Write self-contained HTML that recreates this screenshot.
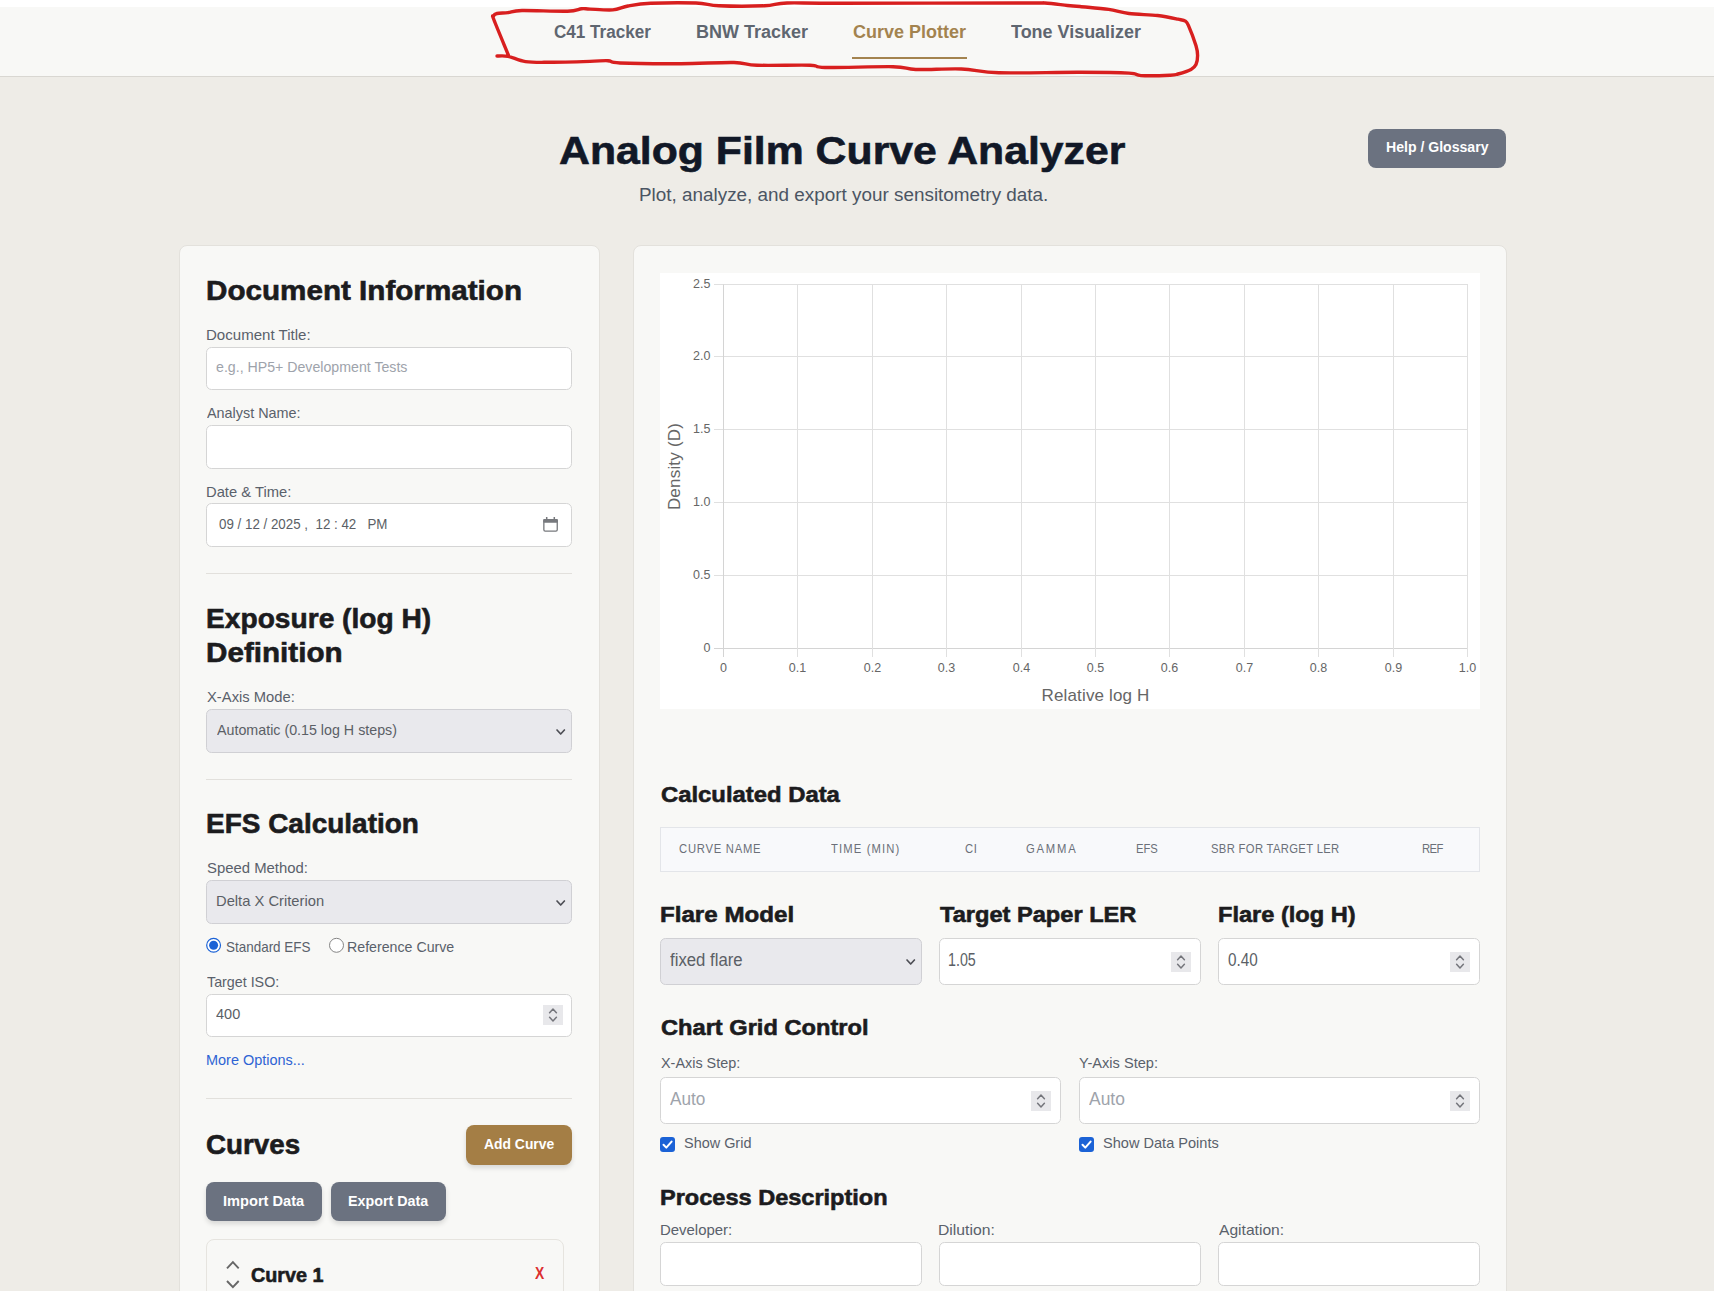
<!DOCTYPE html>
<html><head><meta charset="utf-8">
<style>
html,body{margin:0;padding:0}
body{width:1714px;height:1291px;overflow:hidden;background:#eeece7;position:relative;font-family:"Liberation Sans",sans-serif}
.a{position:absolute;box-sizing:border-box}
.t{position:absolute;white-space:pre;line-height:1;transform-origin:0 0;font-family:"Liberation Sans",sans-serif}
.nav{background:#f8f8f6;border-bottom:1px solid #d9d7d2}
.panel{background:#f8f8f6;border:1px solid #e3e1dc;border-radius:8px}
.inp{background:#ffffff;border:1px solid #d5d5d5;border-radius:5.5px}
.sel{background:#e9e9ed;border:1px solid #d0d0d4;border-radius:5.5px}
.hr{background:#e2e0dc}
.btn{border-radius:8px}
.card{background:#f8f8f6;border:1px solid #e6e4df;border-radius:8px}
</style></head><body>
<div class="a top" style="left:0px;top:0px;width:1714px;height:7px;background:#ffffff"></div>
<div class="a nav" style="left:0px;top:7px;width:1714px;height:70px;"></div>
<div class="a " style="left:852px;top:57px;width:115px;height:2px;background:#a3834f"></div>
<div class="a btn" style="left:1368px;top:129px;width:138px;height:39px;background:#6b7280"></div>
<div class="a panel" style="left:179px;top:245px;width:421px;height:1120px;"></div>
<div class="a panel" style="left:633px;top:245px;width:874px;height:1120px;"></div>
<div class="a inp" style="left:206px;top:347px;width:366px;height:43px;"></div>
<div class="a inp" style="left:206px;top:425px;width:366px;height:44px;"></div>
<div class="a inp" style="left:206px;top:503px;width:366px;height:44px;"></div>
<svg class="a" style="left:541px;top:515px" width="20" height="20"><rect x="2.85" y="4.75" width="13.4" height="11.4" rx="1.3" fill="none" stroke="#77797d" stroke-width="1.3"/><rect x="2.2" y="4.1" width="14.7" height="3.7" rx="1" fill="#77797d"/><path d="M5.7,1.9 V4.5 M13.3,1.9 V4.5" stroke="#77797d" stroke-width="1.5"/></svg>
<div class="a hr" style="left:206px;top:573px;width:366px;height:1px;"></div>
<div class="a sel" style="left:206px;top:709px;width:366px;height:44px;"></div>
<svg class="a" style="left:555.3px;top:727.5px" width="11.4" height="8"><path d="M2,2 L5.7,6 L9.4,2" fill="none" stroke="#4e4f56" stroke-width="1.7" stroke-linecap="round" stroke-linejoin="round"/></svg>
<div class="a hr" style="left:206px;top:779px;width:366px;height:1px;"></div>
<div class="a sel" style="left:206px;top:880px;width:366px;height:44px;"></div>
<svg class="a" style="left:555.3px;top:898.5px" width="11.4" height="8"><path d="M2,2 L5.7,6 L9.4,2" fill="none" stroke="#4e4f56" stroke-width="1.7" stroke-linecap="round" stroke-linejoin="round"/></svg>
<svg class="a" style="left:204px;top:936px" width="20" height="20"><circle cx="9.6" cy="9.3" r="6.9" fill="#fff" stroke="#1b62d6" stroke-width="1.2"/><circle cx="9.6" cy="9.3" r="4.5" fill="#1b62d6"/></svg>
<svg class="a" style="left:326px;top:936px" width="20" height="20"><circle cx="10.5" cy="9.3" r="7" fill="#fff" stroke="#858585" stroke-width="1"/></svg>
<div class="a inp" style="left:206px;top:994px;width:366px;height:43px;"></div>
<div class="a" style="left:543px;top:1005px;width:20px;height:20px;background:#e8e8eb"></div><svg class="a" style="left:543px;top:1005px" width="20" height="20"><path d="M6.6,7.7 L10.0,4.1 L13.4,7.7 M6.6,12.3 L10.0,15.9 L13.4,12.3" fill="none" stroke="#74757b" stroke-width="1.5" stroke-linecap="round" stroke-linejoin="round"/></svg>
<div class="a hr" style="left:206px;top:1098px;width:366px;height:1px;"></div>
<div class="a btn" style="left:466px;top:1125px;width:106px;height:40px;background:#a47e45;box-shadow:0 3px 5px rgba(0,0,0,0.13)"></div>
<div class="a btn" style="left:206px;top:1182px;width:116px;height:39px;background:#6b7280;box-shadow:0 3px 5px rgba(0,0,0,0.13)"></div>
<div class="a btn" style="left:331px;top:1182px;width:115px;height:39px;background:#6b7280;box-shadow:0 3px 5px rgba(0,0,0,0.13)"></div>
<div class="a card" style="left:206px;top:1239px;width:358px;height:120px;"></div>
<svg class="a" style="left:220px;top:1255px" width="26" height="36"><path d="M7,13.3 L12.9,7.2 L18.7,13.3 M7,26 L12.9,32.2 L18.7,26" fill="none" stroke="#676767" stroke-width="1.9" stroke-linecap="butt" stroke-linejoin="miter"/></svg>
<div class="a " style="left:660px;top:273px;width:820px;height:436px;background:#ffffff"></div>
<svg class="a" style="left:660px;top:273px;font-family:'Liberation Sans',sans-serif" width="820" height="436"><path d="M54,11.5 H808.0" stroke="#e0e0e0" stroke-width="1"/><path d="M54,83.5 H808.0" stroke="#e0e0e0" stroke-width="1"/><path d="M54,156.5 H808.0" stroke="#e0e0e0" stroke-width="1"/><path d="M54,229.5 H808.0" stroke="#e0e0e0" stroke-width="1"/><path d="M54,302.5 H808.0" stroke="#e0e0e0" stroke-width="1"/><path d="M54,375.5 H808.0" stroke="#d4d4d4" stroke-width="1"/><path d="M63.5,11.5 V384" stroke="#d4d4d4" stroke-width="1"/><path d="M137.5,11.5 V384" stroke="#e0e0e0" stroke-width="1"/><path d="M212.5,11.5 V384" stroke="#e0e0e0" stroke-width="1"/><path d="M286.5,11.5 V384" stroke="#e0e0e0" stroke-width="1"/><path d="M361.5,11.5 V384" stroke="#e0e0e0" stroke-width="1"/><path d="M435.5,11.5 V384" stroke="#e0e0e0" stroke-width="1"/><path d="M509.5,11.5 V384" stroke="#e0e0e0" stroke-width="1"/><path d="M584.5,11.5 V384" stroke="#e0e0e0" stroke-width="1"/><path d="M658.5,11.5 V384" stroke="#e0e0e0" stroke-width="1"/><path d="M733.5,11.5 V384" stroke="#e0e0e0" stroke-width="1"/><path d="M807.5,11.5 V384" stroke="#e0e0e0" stroke-width="1"/><text x="50.5" y="15.2" text-anchor="end" font-size="12.5" fill="#666">2.5</text><text x="50.5" y="87.2" text-anchor="end" font-size="12.5" fill="#666">2.0</text><text x="50.5" y="160.2" text-anchor="end" font-size="12.5" fill="#666">1.5</text><text x="50.5" y="233.2" text-anchor="end" font-size="12.5" fill="#666">1.0</text><text x="50.5" y="306.2" text-anchor="end" font-size="12.5" fill="#666">0.5</text><text x="50.5" y="379.2" text-anchor="end" font-size="12.5" fill="#666">0</text><text x="63.5" y="399" text-anchor="middle" font-size="12.5" fill="#666">0</text><text x="137.5" y="399" text-anchor="middle" font-size="12.5" fill="#666">0.1</text><text x="212.5" y="399" text-anchor="middle" font-size="12.5" fill="#666">0.2</text><text x="286.5" y="399" text-anchor="middle" font-size="12.5" fill="#666">0.3</text><text x="361.5" y="399" text-anchor="middle" font-size="12.5" fill="#666">0.4</text><text x="435.5" y="399" text-anchor="middle" font-size="12.5" fill="#666">0.5</text><text x="509.5" y="399" text-anchor="middle" font-size="12.5" fill="#666">0.6</text><text x="584.5" y="399" text-anchor="middle" font-size="12.5" fill="#666">0.7</text><text x="658.5" y="399" text-anchor="middle" font-size="12.5" fill="#666">0.8</text><text x="733.5" y="399" text-anchor="middle" font-size="12.5" fill="#666">0.9</text><text x="807.5" y="399" text-anchor="middle" font-size="12.5" fill="#666">1.0</text><text x="435.5" y="428" text-anchor="middle" font-size="17" letter-spacing="0.15" fill="#666">Relative log H</text><text transform="translate(20,193.5) rotate(-90)" text-anchor="middle" font-size="17" letter-spacing="0.2" fill="#666">Density (D)</text></svg>
<div class="a " style="left:660px;top:827px;width:820px;height:45px;background:#f8f9fb;border:1px solid #e3e5e9"></div>
<div class="a sel" style="left:660px;top:938px;width:262px;height:47px;"></div>
<svg class="a" style="left:904.9px;top:958.3px" width="11.4" height="8"><path d="M2,2 L5.7,6 L9.4,2" fill="none" stroke="#4e4f56" stroke-width="1.7" stroke-linecap="round" stroke-linejoin="round"/></svg>
<div class="a inp" style="left:939px;top:938px;width:262px;height:47px;"></div>
<div class="a" style="left:1171px;top:952px;width:20px;height:20px;background:#e8e8eb"></div><svg class="a" style="left:1171px;top:952px" width="20" height="20"><path d="M6.6,7.7 L10.0,4.1 L13.4,7.7 M6.6,12.3 L10.0,15.9 L13.4,12.3" fill="none" stroke="#74757b" stroke-width="1.5" stroke-linecap="round" stroke-linejoin="round"/></svg>
<div class="a inp" style="left:1218px;top:938px;width:262px;height:47px;"></div>
<div class="a" style="left:1450px;top:952px;width:20px;height:20px;background:#e8e8eb"></div><svg class="a" style="left:1450px;top:952px" width="20" height="20"><path d="M6.6,7.7 L10.0,4.1 L13.4,7.7 M6.6,12.3 L10.0,15.9 L13.4,12.3" fill="none" stroke="#74757b" stroke-width="1.5" stroke-linecap="round" stroke-linejoin="round"/></svg>
<div class="a inp" style="left:660px;top:1077px;width:401px;height:47px;"></div>
<div class="a" style="left:1031px;top:1091px;width:20px;height:20px;background:#e8e8eb"></div><svg class="a" style="left:1031px;top:1091px" width="20" height="20"><path d="M6.6,7.7 L10.0,4.1 L13.4,7.7 M6.6,12.3 L10.0,15.9 L13.4,12.3" fill="none" stroke="#74757b" stroke-width="1.5" stroke-linecap="round" stroke-linejoin="round"/></svg>
<div class="a inp" style="left:1079px;top:1077px;width:401px;height:47px;"></div>
<div class="a" style="left:1450px;top:1091px;width:20px;height:20px;background:#e8e8eb"></div><svg class="a" style="left:1450px;top:1091px" width="20" height="20"><path d="M6.6,7.7 L10.0,4.1 L13.4,7.7 M6.6,12.3 L10.0,15.9 L13.4,12.3" fill="none" stroke="#74757b" stroke-width="1.5" stroke-linecap="round" stroke-linejoin="round"/></svg>
<div class="a" style="left:660px;top:1136.5px;width:15px;height:15px;background:#1b62d6;border-radius:3px"></div><svg class="a" style="left:660px;top:1136.5px" width="15" height="15"><path d="M3.5,7.8 L6.3,10.6 L11.6,4.6" fill="none" stroke="#fff" stroke-width="2" stroke-linecap="round" stroke-linejoin="round"/></svg>
<div class="a" style="left:1079px;top:1136.5px;width:15px;height:15px;background:#1b62d6;border-radius:3px"></div><svg class="a" style="left:1079px;top:1136.5px" width="15" height="15"><path d="M3.5,7.8 L6.3,10.6 L11.6,4.6" fill="none" stroke="#fff" stroke-width="2" stroke-linecap="round" stroke-linejoin="round"/></svg>
<div class="a inp" style="left:660px;top:1242px;width:262px;height:44px;"></div>
<div class="a inp" style="left:939px;top:1242px;width:262px;height:44px;"></div>
<div class="a inp" style="left:1218px;top:1242px;width:262px;height:44px;"></div>
<div class="t" style="left:554.00px;top:22.80px;font-size:18.75px;font-weight:700;color:#5f6670;letter-spacing:0.000px;transform:scaleX(0.9119)">C41 Tracker</div>
<div class="t" style="left:695.64px;top:22.80px;font-size:18.75px;font-weight:700;color:#5f6670;letter-spacing:0.000px;transform:scaleX(0.9595)">BNW Tracker</div>
<div class="t" style="left:852.80px;top:22.80px;font-size:18.75px;font-weight:700;color:#a3834f;letter-spacing:0.000px;transform:scaleX(0.9600)">Curve Plotter</div>
<div class="t" style="left:1011.10px;top:22.80px;font-size:18.75px;font-weight:700;color:#5f6670;letter-spacing:0.000px;transform:scaleX(0.9574)">Tone Visualizer</div>
<div class="t" style="left:558.60px;top:130.80px;font-size:39.24px;font-weight:700;color:#111827;letter-spacing:0.000px;transform:scaleX(1.0901);-webkit-text-stroke:0.6px #111827">Analog Film Curve Analyzer</div>
<div class="t" style="left:638.99px;top:185.50px;font-size:18.75px;font-weight:400;color:#4b5563;letter-spacing:0.000px;transform:scaleX(1.0070)">Plot, analyze, and export your sensitometry data.</div>
<div class="t" style="left:1385.67px;top:138.70px;font-size:15.12px;font-weight:700;color:#ffffff;letter-spacing:0.000px;transform:scaleX(0.9315)">Help / Glossary</div>
<div class="t" style="left:205.93px;top:276.70px;font-size:27.62px;font-weight:700;color:#1c1c1e;letter-spacing:0.000px;transform:scaleX(1.0730);-webkit-text-stroke:0.6px #1c1c1e">Document Information</div>
<div class="t" style="left:205.69px;top:327.90px;font-size:14.97px;font-weight:400;color:#5a616b;letter-spacing:0.000px;transform:scaleX(1.0058)">Document Title:</div>
<div class="t" style="left:216.40px;top:360.00px;font-size:14.24px;font-weight:400;color:#9ea3ab;letter-spacing:0.000px;transform:scaleX(0.9951)">e.g., HP5+ Development Tests</div>
<div class="t" style="left:207.00px;top:405.60px;font-size:14.97px;font-weight:400;color:#5a616b;letter-spacing:0.000px;transform:scaleX(0.9618)">Analyst Name:</div>
<div class="t" style="left:205.61px;top:485.00px;font-size:14.97px;font-weight:400;color:#5a616b;letter-spacing:0.000px;transform:scaleX(0.9855)">Date &amp; Time:</div>
<div class="t" style="left:219.30px;top:516.20px;font-size:15.55px;font-weight:400;color:#5b5f66;letter-spacing:0.000px;transform:scaleX(0.8584)">09 / 12 / 2025 ,  12 : 42   PM</div>
<div class="t" style="left:205.98px;top:604.70px;font-size:27.62px;font-weight:700;color:#1c1c1e;letter-spacing:0.000px;transform:scaleX(1.0197);-webkit-text-stroke:0.6px #1c1c1e">Exposure (log H)</div>
<div class="t" style="left:205.93px;top:639.20px;font-size:27.62px;font-weight:700;color:#1c1c1e;letter-spacing:0.000px;transform:scaleX(1.0732);-webkit-text-stroke:0.6px #1c1c1e">Definition</div>
<div class="t" style="left:206.60px;top:690.00px;font-size:14.97px;font-weight:400;color:#5a616b;letter-spacing:0.000px;transform:scaleX(0.9869)">X-Axis Mode:</div>
<div class="t" style="left:216.60px;top:722.80px;font-size:14.97px;font-weight:400;color:#5b5f66;letter-spacing:0.000px;transform:scaleX(0.9530)">Automatic (0.15 log H steps)</div>
<div class="t" style="left:205.99px;top:810.00px;font-size:27.62px;font-weight:700;color:#1c1c1e;letter-spacing:0.000px;transform:scaleX(1.0129);-webkit-text-stroke:0.6px #1c1c1e">EFS Calculation</div>
<div class="t" style="left:206.60px;top:860.80px;font-size:14.97px;font-weight:400;color:#5a616b;letter-spacing:0.000px;transform:scaleX(0.9943)">Speed Method:</div>
<div class="t" style="left:215.62px;top:894.00px;font-size:14.97px;font-weight:400;color:#5b5f66;letter-spacing:0.000px;transform:scaleX(0.9845)">Delta X Criterion</div>
<div class="t" style="left:225.50px;top:940.20px;font-size:14.97px;font-weight:400;color:#5a616b;letter-spacing:0.000px;transform:scaleX(0.8986)">Standard EFS</div>
<div class="t" style="left:347.05px;top:940.20px;font-size:14.97px;font-weight:400;color:#5a616b;letter-spacing:0.000px;transform:scaleX(0.9479)">Reference Curve</div>
<div class="t" style="left:206.60px;top:975.30px;font-size:14.97px;font-weight:400;color:#5a616b;letter-spacing:0.000px;transform:scaleX(0.9538)">Target ISO:</div>
<div class="t" style="left:216.30px;top:1007.20px;font-size:14.97px;font-weight:400;color:#5b5f66;letter-spacing:0.000px;transform:scaleX(0.9696)">400</div>
<div class="t" style="left:205.63px;top:1053.00px;font-size:14.97px;font-weight:400;color:#2f64d4;letter-spacing:0.000px;transform:scaleX(0.9664)">More Options...</div>
<div class="t" style="left:205.97px;top:1132.30px;font-size:27.03px;font-weight:700;color:#1c1c1e;letter-spacing:0.000px;transform:scaleX(1.0271);-webkit-text-stroke:0.6px #1c1c1e">Curves</div>
<div class="t" style="left:484.00px;top:1135.80px;font-size:15.41px;font-weight:700;color:#ffffff;letter-spacing:0.000px;transform:scaleX(0.9013)">Add Curve</div>
<div class="t" style="left:222.75px;top:1193.00px;font-size:15.41px;font-weight:700;color:#ffffff;letter-spacing:0.000px;transform:scaleX(0.9479)">Import Data</div>
<div class="t" style="left:347.57px;top:1193.00px;font-size:15.41px;font-weight:700;color:#ffffff;letter-spacing:0.000px;transform:scaleX(0.9279)">Export Data</div>
<div class="t" style="left:251.00px;top:1264.90px;font-size:20.06px;font-weight:700;color:#1c1c1e;letter-spacing:0.000px;transform:scaleX(0.9865);-webkit-text-stroke:0.6px #1c1c1e">Curve 1</div>
<div class="t" style="left:534.70px;top:1265.00px;font-size:17.3px;font-weight:700;color:#dc2f2f;letter-spacing:0.000px;transform:scaleX(0.8000)">X</div>
<div class="t" style="left:660.70px;top:783.40px;font-size:22.67px;font-weight:700;color:#1c1c1e;letter-spacing:0.000px;transform:scaleX(1.0524);-webkit-text-stroke:0.6px #1c1c1e">Calculated Data</div>
<div class="t" style="left:678.90px;top:843.10px;font-size:12.94px;font-weight:400;color:#6b7079;letter-spacing:0.860px;transform:scaleX(0.8700)">CURVE NAME</div>
<div class="t" style="left:831.00px;top:843.10px;font-size:12.94px;font-weight:400;color:#6b7079;letter-spacing:1.293px;transform:scaleX(0.8700)">TIME (MIN)</div>
<div class="t" style="left:964.70px;top:843.10px;font-size:12.94px;font-weight:400;color:#6b7079;letter-spacing:0.645px;transform:scaleX(0.8700)">CI</div>
<div class="t" style="left:1026.00px;top:843.10px;font-size:12.94px;font-weight:400;color:#6b7079;letter-spacing:2.056px;transform:scaleX(0.8700)">GAMMA</div>
<div class="t" style="left:1136.13px;top:843.10px;font-size:12.94px;font-weight:400;color:#6b7079;letter-spacing:-0.025px;transform:scaleX(0.8700)">EFS</div>
<div class="t" style="left:1211.00px;top:843.10px;font-size:12.94px;font-weight:400;color:#6b7079;letter-spacing:0.379px;transform:scaleX(0.8700)">SBR FOR TARGET LER</div>
<div class="t" style="left:1422.43px;top:843.10px;font-size:12.94px;font-weight:400;color:#6b7079;letter-spacing:-0.590px;transform:scaleX(0.8700)">REF</div>
<div class="t" style="left:659.62px;top:904.20px;font-size:22.38px;font-weight:700;color:#1c1c1e;letter-spacing:0.000px;transform:scaleX(1.0785);-webkit-text-stroke:0.6px #1c1c1e">Flare Model</div>
<div class="t" style="left:939.80px;top:904.20px;font-size:22.38px;font-weight:700;color:#1c1c1e;letter-spacing:0.000px;transform:scaleX(1.0552);-webkit-text-stroke:0.6px #1c1c1e">Target Paper LER</div>
<div class="t" style="left:1218.35px;top:904.20px;font-size:22.38px;font-weight:700;color:#1c1c1e;letter-spacing:0.000px;transform:scaleX(1.0544);-webkit-text-stroke:0.6px #1c1c1e">Flare (log H)</div>
<div class="t" style="left:670.00px;top:952.00px;font-size:17.44px;font-weight:400;color:#5b5f66;letter-spacing:0.000px;transform:scaleX(0.9613)">fixed flare</div>
<div class="t" style="left:947.78px;top:952.00px;font-size:17.44px;font-weight:400;color:#5b5f66;letter-spacing:0.000px;transform:scaleX(0.8188)">1.05</div>
<div class="t" style="left:1228.40px;top:952.00px;font-size:17.44px;font-weight:400;color:#5b5f66;letter-spacing:0.000px;transform:scaleX(0.8762)">0.40</div>
<div class="t" style="left:660.70px;top:1015.90px;font-size:22.67px;font-weight:700;color:#1c1c1e;letter-spacing:0.000px;transform:scaleX(1.0432);-webkit-text-stroke:0.6px #1c1c1e">Chart Grid Control</div>
<div class="t" style="left:660.70px;top:1056.40px;font-size:14.97px;font-weight:400;color:#5a616b;letter-spacing:0.000px;transform:scaleX(0.9618)">X-Axis Step:</div>
<div class="t" style="left:1079.30px;top:1056.40px;font-size:14.97px;font-weight:400;color:#5a616b;letter-spacing:0.000px;transform:scaleX(0.9759)">Y-Axis Step:</div>
<div class="t" style="left:670.30px;top:1091.20px;font-size:17.73px;font-weight:400;color:#9ea3ab;letter-spacing:0.000px;transform:scaleX(0.9701)">Auto</div>
<div class="t" style="left:1089.00px;top:1091.20px;font-size:17.73px;font-weight:400;color:#9ea3ab;letter-spacing:0.000px;transform:scaleX(0.9837)">Auto</div>
<div class="t" style="left:684.30px;top:1136.10px;font-size:14.97px;font-weight:400;color:#5a616b;letter-spacing:0.000px;transform:scaleX(0.9647)">Show Grid</div>
<div class="t" style="left:1103.00px;top:1136.10px;font-size:14.97px;font-weight:400;color:#5a616b;letter-spacing:0.000px;transform:scaleX(0.9730)">Show Data Points</div>
<div class="t" style="left:659.66px;top:1185.50px;font-size:22.67px;font-weight:700;color:#1c1c1e;letter-spacing:0.000px;transform:scaleX(1.0389);-webkit-text-stroke:0.6px #1c1c1e">Process Description</div>
<div class="t" style="left:659.70px;top:1222.80px;font-size:14.97px;font-weight:400;color:#5a616b;letter-spacing:0.000px;transform:scaleX(0.9967)">Developer:</div>
<div class="t" style="left:938.15px;top:1222.80px;font-size:14.97px;font-weight:400;color:#5a616b;letter-spacing:0.000px;transform:scaleX(1.0497)">Dilution:</div>
<div class="t" style="left:1218.90px;top:1222.80px;font-size:14.97px;font-weight:400;color:#5a616b;letter-spacing:0.000px;transform:scaleX(1.0432)">Agitation:</div>
<svg class="a" style="left:0;top:0;z-index:10" width="1714" height="100"><path d="M497,56 C498.8,56.0 503.2,55.4 508,56.3 C512.8,57.2 518.5,60.6 525.5,61.6 C532.5,62.6 539.2,62.3 550,62.3 C560.8,62.3 580.3,61.7 590,61.4 C599.7,61.1 603.0,60.4 608,60.7 C613.0,61.0 607.8,62.5 620,63 C632.2,63.5 662.0,63.8 681,63.7 C700.0,63.6 721.3,62.2 734,62.5 C746.7,62.8 744.3,64.8 757,65.2 C769.7,65.7 798.7,64.8 810,65.2 C821.3,65.6 811.2,67.2 825,67.5 C838.8,67.8 877.9,66.4 893,66.7 C908.1,67.0 904.4,69.1 915.8,69.5 C927.2,69.9 947.5,68.5 961.4,69 C975.3,69.5 979.2,72.2 999,72.8 C1018.8,73.3 1058.3,72.2 1080,72.3 C1101.7,72.3 1118.8,72.5 1129,73.1 C1139.2,73.6 1134.2,75.2 1141,75.6 C1147.8,75.9 1163.8,75.5 1170,75.2 C1176.2,74.9 1174.5,75.0 1178,74 C1181.5,73.0 1188.0,71.0 1191,69.4 C1194.0,67.8 1194.9,66.8 1196,64.5 C1197.1,62.2 1197.6,58.7 1197.6,55.6 C1197.6,52.5 1197.5,50.7 1196,45.8 C1194.5,40.9 1190.5,30.2 1188.7,26.1 C1186.9,22.0 1187.2,22.4 1185.4,21.2 C1183.6,20.0 1182.6,20.1 1178,19.2 C1173.4,18.2 1165.8,16.4 1157.6,15.5 C1149.4,14.6 1137.2,14.5 1129,13.5 C1120.8,12.5 1116.8,10.6 1108.6,9.4 C1100.4,8.2 1086.8,7.2 1080,6.5 C1073.2,5.8 1073.4,6.1 1067.5,5.5 C1061.6,4.9 1052.4,3.4 1044.8,3 C1037.2,2.6 1056.1,3.0 1022,3 C987.9,3.0 879.2,3.3 840,3.3 C800.8,3.3 799.6,2.6 787,3 C774.4,3.4 775.8,5.3 764.5,5.8 C753.2,6.3 730.4,6.3 719,5.8 C707.6,5.3 707.4,3.4 696,3 C684.6,2.6 662.0,2.8 650.7,3.3 C639.4,3.8 634.3,4.9 628,6 C621.7,7.1 619.1,9.4 612.8,9.9 C606.5,10.4 595.2,9.3 590,9.1 C584.8,8.9 585.2,8.4 581.5,8.75 C577.8,9.1 577.4,10.9 567.5,11.2 C557.6,11.5 531.9,10.3 522,10.5 C512.1,10.7 512.2,12.1 508,12.6 C503.8,13.1 499.4,12.9 497,13.5 C494.6,14.1 494.0,14.9 493.5,16 C493.0,17.1 491.5,13.4 494,20 C496.5,26.6 506.1,49.4 508.5,55.3" fill="none" stroke="#d81f1f" stroke-width="3.4" stroke-linecap="round" stroke-linejoin="round"/></svg>
</body></html>
